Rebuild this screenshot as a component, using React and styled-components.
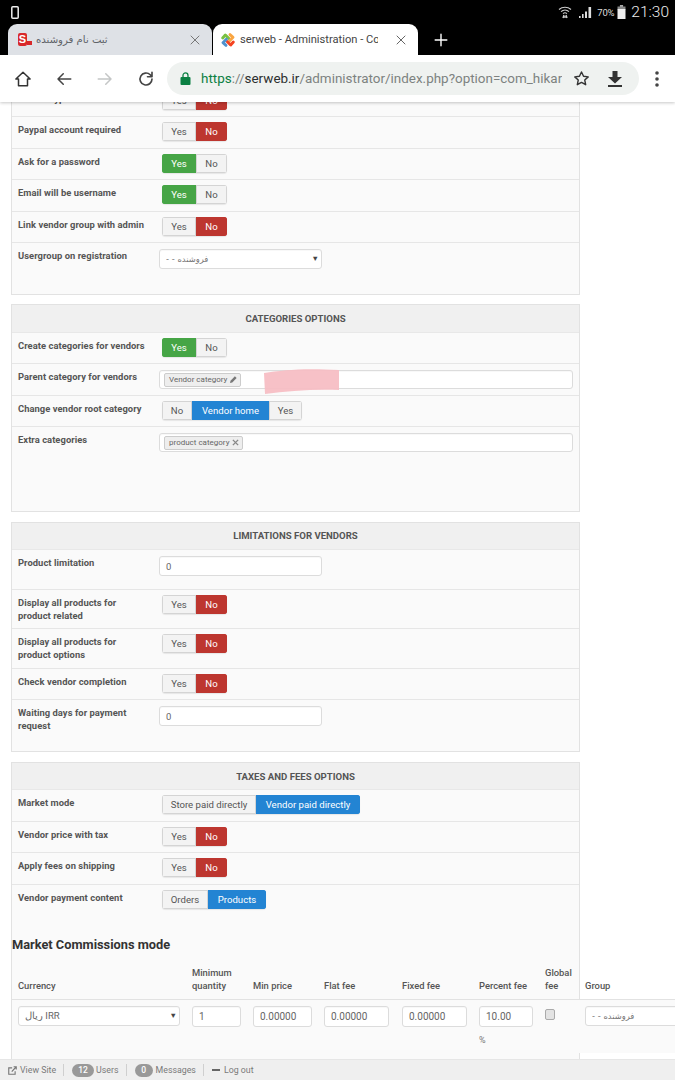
import React from 'react';
import styled, { createGlobalStyle } from 'styled-components';

const Global = createGlobalStyle`
  html, body { margin: 0; padding: 0; height: 100%; background: #fff; overflow: hidden; }
  body { font-family: Roboto, "Liberation Sans", sans-serif; }
  #root { height: 1080px; }
  * { box-sizing: border-box; }
`;

const Screen = styled.div`
  width: 675px; height: 1080px; display: flex; flex-direction: column; overflow: hidden; position: relative; background: #fff;
`;
const Chrome = styled.header`
  flex: none; position: relative; z-index: 3; box-shadow: 0 1px 3px rgba(0,0,0,.22);
`;
const StatusBar = styled.div`
  height: 24px; background: #000; color: #e8e8e8; display: flex; align-items: center; padding: 0 6px 0 11px;
`;
const StatusSpacer = styled.div`flex: 1;`;
const Percent = styled.span`font-size: 9.5px; margin: 0 3px 0 4px; color: #ddd; letter-spacing: -.2px;`;
const Clock = styled.span`font-size: 15.5px; font-weight: 300; margin-left: 5px; color: #eee;`;
const TabStrip = styled.div`
  height: 31px; background: #000; display: flex; align-items: stretch; padding-left: 8px; gap: 1px;
`;
const Tab = styled.div`
  width: ${p => p.$w}px; border-radius: 9px 9px 0 0; background: ${p => (p.$active ? '#fff' : '#dee1e6')};
  display: flex; align-items: center; padding: 0 11px 0 ${p => (p.$active ? 7 : 10)}px; gap: 4px; overflow: hidden;
`;
const TabTitle = styled.span`
  flex: none; width: 138px; font-size: 11.15px; color: #444; white-space: nowrap; overflow: hidden;
`;
const TabSpacer = styled.span`flex: 1;`;
const PersianTitle = styled.span`
  flex: 1; font-size: 10.1px; color: #5f6368; white-space: nowrap; font-family: "DejaVu Sans", sans-serif;
`;
const Favicon = styled.span`
  flex: none; width: 14px; height: 13px; position: relative; display: block;
  &::before { content: 'S'; position: absolute; left: 0; top: 0; width: 9px; height: 13px; border-radius: 2px; background: #d8282a; color: #fff; font: 700 11px/13px "Liberation Sans", sans-serif; text-align: center; }
  &::after { content: ''; position: absolute; right: 0; bottom: 1px; width: 5px; height: 4px; background: #d8282a; }
`;
const NewTab = styled.div`
  width: 44px; display: flex; align-items: center; justify-content: center; color: #fff;
`;
const Toolbar = styled.div`
  height: 47px; background: #fff; display: flex; align-items: center; padding: 0 12px 0 14px;
`;
const IconSlot = styled.div`
  width: ${p => p.$w || 41}px; flex: none; display: flex; justify-content: ${p => (p.$left ? 'flex-start' : 'center')};
`;
const Omnibox = styled.div`
  flex: none; width: 472px; height: 33px; border-radius: 17px; background: #eff2f0; display: flex; align-items: center; padding: 0 0 0 13px;
`;
const Url = styled.div`
  flex: none; width: 361px; margin-left: 10px; font-size: 13.45px; white-space: nowrap; overflow: hidden; color: #7d8280;
`;
const Scheme = styled.span`color: #0b8043;`;
const Host = styled.span`color: #2c2f2e;`;
const Sep = styled.span`color: #7d8280;`;

const Main = styled.main`flex: 1; min-height: 0; overflow: hidden;`;

const Panel = styled.section`
  width: 569px; margin: ${p => (p.$first ? -17 : 0)}px 0 9.4px 11px; background: #fafafa; border: 1px solid #e2e2e2;
`;
const PanelHead = styled.h3`
  margin: 0; height: 27.6px; background: #f0f0f0; display: flex; align-items: center; justify-content: center;
  font-size: 9.6px; font-weight: 700; color: #555; border-bottom: 1px solid #e8e8e8;
`;
const Row = styled.div`
  height: ${p => p.$h || 31.4}px; display: grid; grid-template-columns: 141px 1fr; padding: 5px 6px 0 6px; border-bottom: 1px solid ${p => (p.$last ? 'transparent' : '#e6e6e6')};
`;
const Label = styled.label`
  font-size: 9.4px; font-weight: 700; line-height: 13px; color: #555; width: 130px; padding-top: 1px; letter-spacing: .05px;
`;
const Control = styled.div`padding-left: ${p => (p.$field ? 0 : 3)}px; position: relative; padding-top: ${p => (p.$field ? 1 : 0)}px;`;

const ToggleGroup = styled.div`
  display: flex; width: fit-content; height: 19px; border-radius: 3px; overflow: hidden; box-shadow: 0 1px 1px rgba(0,0,0,.08);
`;
const Opt = styled.span`
  width: ${p => p.$w}px; display: flex; align-items: center; justify-content: center; font-size: 9.6px;
  background: ${p => ({ yes: '#46a546', no: '#bd362f', blue: '#2384d3' }[p.$on] || '#f3f3f3')};
  color: ${p => (p.$on ? '#fff' : '#555')};
  border: 1px solid ${p => ({ yes: '#46a546', no: '#bd362f', blue: '#2384d3' }[p.$on] || '#d4d4d4')};
`;
const Field = styled.div`
  width: ${p => p.$w || 163}px; height: 20px; background: #fff; border: 1px solid #dcdcdc; border-radius: 3px;
  display: flex; align-items: center; padding: 0 6px; font-size: 9.5px; color: #666; position: relative; box-shadow: inset 0 1px 1px rgba(0,0,0,.03);
`;
const FieldText = styled.span`flex: 1; white-space: nowrap; overflow: hidden;`;
const PersianOption = styled(FieldText)`font-family: "DejaVu Sans", sans-serif; font-size: 8.4px; color: #777;`;
const Caret = styled.span`font-size: 7.5px; color: #444; margin-right: -4px;`;
const TagInput = styled(Field)`width: 414px; height: 19px; padding: 0 4px;`;
const Tag = styled.span`
  display: inline-flex; align-items: center; gap: 3px; height: 14px; padding: 0 3px 0 4px; background: #eee; border: 1px solid #ccc; border-radius: 2px; font-size: 8px; color: #666;
`;
const Smear = styled.svg`
  position: absolute; left: 104px; top: -1px; width: 78px; height: 26px; pointer-events: none;
`;

const HeadingWrap = styled.div`height: 40px;`;
const Heading = styled.h2`
  margin: 0; padding-top: 16px; font-size: 12.8px; line-height: 16px; font-weight: 700; color: #333;
`;
const CommissionGrid = styled.div`
  width: 663px; display: grid; grid-template-columns: 180px 61px 71px 78px 77px 66px 40px 90px;
`;
const Th = styled.div`
  font-size: 9.4px; font-weight: 500; line-height: 13.5px; color: #555; height: 39px; display: flex; align-items: flex-end; padding-bottom: 6px;
  border-bottom: 1px solid #e2e2e2; padding-left: ${p => (p.$first ? 6 : 0)}px;
`;
const Td = styled.div`padding: 6px 0 0 ${p => (p.$first ? 6 : 0)}px; height: 53px; font-size: 9.5px; color: #777; background: #fafafa;`;
const Mini = styled(Field)`width: ${p => p.$w}px; font-size: 10px; height: 21px;`;
const PercentSign = styled.div`margin-top: 8px; font-size: 9px;`;
const Check = styled.input.attrs({ type: 'checkbox', readOnly: true })`
  appearance: none; display: block; margin: 3px 0 0; width: 10px; height: 11px; background: #e3e3e3; border: 1px solid #aaa; border-radius: 2px;
`;
const PanelTail = styled.div`height: 30px;`;

const Footer = styled.footer`
  flex: none; height: 21px; background: #efefef; border-top: 1px solid #e6e6e6; display: flex; align-items: center; padding-left: 8px; font-size: 8.8px; color: #7a7a7a; position: relative; z-index: 2;
`;
const FootItem = styled.span`display: flex; align-items: center; gap: ${p => p.$gap || 3}px;`;
const Divider = styled.span`width: 1px; height: 12px; background: #cfcfcf; margin: 0 8px 0 7px;`;
const Badge = styled.span`
  height: 13px; min-width: ${p => p.$w}px; border-radius: 7px; background: #999; color: #fff; font-size: 8.5px; font-weight: 500; display: flex; align-items: center; justify-content: center;
`;
const Minus = styled.span`width: 8px; height: 2px; background: #666; display: block; margin-right: 1px;`;

const YN = ({ v }) => (
  <ToggleGroup>
    <Opt $w={34} $on={v === 'yes' ? 'yes' : null}>Yes</Opt>
    <Opt $w={31} $on={v === 'no' ? 'no' : null}>No</Opt>
  </ToggleGroup>
);
const Choice = ({ items }) => (
  <ToggleGroup>
    {items.map(([t, w, on]) => <Opt key={t} $w={w} $on={on ? 'blue' : null}>{t}</Opt>)}
  </ToggleGroup>
);
const ToggleRow = ({ label, v, h, last }) => (
  <Row $h={h} $last={last}><Label>{label}</Label><Control><YN v={v} /></Control></Row>
);
const FieldRow = ({ label, h, last, children }) => (
  <Row $h={h} $last={last}><Label>{label}</Label><Control $field>{children}</Control></Row>
);

const I = ({ w = 18, h = 18, vb = '0 0 24 24', c = '#444', sw = 2, fill = 'none', children }) => (
  <svg width={w} height={h} viewBox={vb} fill={fill} stroke={c} strokeWidth={sw} strokeLinecap="round" strokeLinejoin="round">{children}</svg>
);
const Close = ({ c }) => (
  <I w={12} h={12} c={c} sw={2}><path d="M4 4l16 16M20 4L4 20" /></I>
);
const Joomla = () => (
  <svg width="16" height="16" viewBox="0 0 24 24" fill="none" strokeWidth="4.4" strokeLinecap="round" strokeLinejoin="round">
    <path d="M4 9L8 4.5l5 5" stroke="#7ac143" />
    <path d="M15 4l4.5 4-5 5" stroke="#f9a541" />
    <path d="M20 15l-4 4.5-5-5" stroke="#f44321" />
    <path d="M9 20l-4.5-4 5-5" stroke="#5091cd" />
  </svg>
);

export default function App() {
  return (
    <Screen>
      <Global />
      <Chrome>
        <StatusBar>
          <svg width="8" height="13" viewBox="0 0 8 13" fill="none" stroke="#eee" strokeWidth="1.5"><rect x=".8" y=".8" width="6.4" height="11.4" rx="1" /></svg>
          <StatusSpacer />
          <svg width="14" height="14" viewBox="0 0 14 14" fill="none" stroke="#ccc" strokeWidth="1.1">
            <path d="M1 4.5c3.4-3 8.6-3 12 0M3 6.6c2.3-2 5.7-2 8 0M5 8.6c1.2-1 2.8-1 4 0" />
            <path d="M5 13l1-3M9 13l-1-3M5.5 12h3" strokeWidth="1.4" />
          </svg>
          <svg width="14" height="12" viewBox="0 0 14 12" fill="#ddd" style={{ marginLeft: 7 }}>
            <rect x="0" y="10" width="1.6" height="2" /><rect x="3" y="8" width="1.6" height="4" /><rect x="6" y="5.5" width="2" height="6.5" /><rect x="9.5" y="1" width="2.6" height="11" />
          </svg>
          <Percent>70%</Percent>
          <svg width="9" height="14" viewBox="0 0 8 14" fill="#eee"><rect x="2.4" y="0" width="3.2" height="2" fill="#aaa" /><rect x="0" y="1.5" width="8" height="3" fill="#888" /><rect x="0" y="4" width="8" height="10" /></svg>
          <Clock>21:30</Clock>
        </StatusBar>
        <TabStrip>
          <Tab $w={204}>
            <Favicon />
            <PersianTitle>ثبت نام فروشنده</PersianTitle>
            <Close c="#777" />
          </Tab>
          <Tab $w={205} $active>
            <Joomla />
            <TabTitle>serweb - Administration - Cor</TabTitle>
            <TabSpacer />
            <Close c="#666" />
          </Tab>
          <NewTab><I w={14} h={14} c="#fff" sw={2.4}><path d="M12 2v20M2 12h20" /></I></NewTab>
        </TabStrip>
        <Toolbar>
          <IconSlot $w={41} $left>
            <I w={18} h={18} c="#333" sw={2}><path d="M12 3L2.5 12H6v9h12v-9h3.5z" /></I>
          </IconSlot>
          <IconSlot $w={41} $left>
            <I w={18} h={18} c="#444" sw={2}><path d="M21 12H4M11 5l-7 7 7 7" /></I>
          </IconSlot>
          <IconSlot $w={41} $left>
            <I w={18} h={18} c="#c4c6c6" sw={2}><path d="M3 12h17M13 5l7 7-7 7" /></I>
          </IconSlot>
          <IconSlot $w={30} $left>
            <I w={18} h={18} c="#444" sw={2.2}><path d="M20 12a8 8 0 1 1-2.4-5.7L20 9M20 3v6h-6" /></I>
          </IconSlot>
          <Omnibox>
            <svg width="11" height="13" viewBox="0 0 11 13" fill="#0b8043"><rect x="0.5" y="5" width="10" height="8" rx="1" /><path d="M3 5V3.4a2.5 2.5 0 0 1 5 0V5" fill="none" stroke="#0b8043" strokeWidth="1.3" /></svg>
            <Url><Scheme>https</Scheme><Sep>://</Sep><Host>serweb.ir</Host>/administrator/index.php?option=com_hikar</Url>
            <IconSlot $w={39}>
              <I w={17} h={17} c="#333" sw={2}><path d="M12 2.8l2.9 6.1 6.6.8-4.9 4.5 1.3 6.6L12 17.5l-5.9 3.3 1.3-6.6-4.9-4.5 6.6-.8z" /></I>
            </IconSlot>
            <IconSlot $w={28}>
              <svg width="14" height="16" viewBox="0 0 14 16" fill="#333"><path d="M4.5 0h5v6H14L7 12.5 0 6h4.5z" /><rect x="0" y="14" width="14" height="2" /></svg>
            </IconSlot>
          </Omnibox>
          <IconSlot $w={36}>
            <svg width="4" height="16" viewBox="0 0 4 16" fill="#444"><circle cx="2" cy="2" r="1.8" /><circle cx="2" cy="8" r="1.8" /><circle cx="2" cy="14" r="1.8" /></svg>
          </IconSlot>
        </Toolbar>
      </Chrome>

      <Main>
        <Panel $first>
          <ToggleRow label="Vendor type" v="no" />
          <ToggleRow label="Paypal account required" v="no" />
          <ToggleRow label="Ask for a password" v="yes" />
          <ToggleRow label="Email will be username" v="yes" />
          <ToggleRow label="Link vendor group with admin" v="no" />
          <FieldRow label="Usergroup on registration" h={51} last>
            <Field><PersianOption>- - فروشنده</PersianOption><Caret>▼</Caret></Field>
          </FieldRow>
        </Panel>

        <Panel>
          <PanelHead>CATEGORIES OPTIONS</PanelHead>
          <ToggleRow label="Create categories for vendors" v="yes" />
          <FieldRow label="Parent category for vendors">
            <TagInput>
              <Tag>Vendor category
                <svg width="7" height="7" viewBox="0 0 8 8" fill="#777"><path d="M0 8l.6-2.6L5.6.4l2 2-5 5z" /></svg>
              </Tag>
            </TagInput>
            <Smear viewBox="0 0 78 26" preserveAspectRatio="none"><path d="M1 5C20 2 40 0 76 2l0 20C50 21 25 23 2 26z" fill="#f6bcc2" opacity=".92" /></Smear>
          </FieldRow>
          <Row>
            <Label>Change vendor root category</Label>
            <Control><Choice items={[['No', 30], ['Vendor home', 77, true], ['Yes', 33]]} /></Control>
          </Row>
          <FieldRow label="Extra categories" h={84} last>
            <TagInput>
              <Tag>product category
                <svg width="7" height="7" viewBox="0 0 8 8" stroke="#888" strokeWidth="1.6"><path d="M1 1l6 6M7 1L1 7" /></svg>
              </Tag>
            </TagInput>
          </FieldRow>
        </Panel>

        <Panel>
          <PanelHead>LIMITATIONS FOR VENDORS</PanelHead>
          <FieldRow label="Product limitation" h={40}><Field>0</Field></FieldRow>
          <ToggleRow label="Display all products for product related" v="no" h={39} />
          <ToggleRow label="Display all products for product options" v="no" h={39.6} />
          <ToggleRow label="Check vendor completion" v="no" h={31.4} />
          <FieldRow label="Waiting days for payment request" h={51.4} last><Field>0</Field></FieldRow>
        </Panel>

        <Panel>
          <PanelHead>TAXES AND FEES OPTIONS</PanelHead>
          <Row><Label>Market mode</Label><Control><Choice items={[['Store paid directly', 94], ['Vendor paid directly', 104, true]]} /></Control></Row>
          <ToggleRow label="Vendor price with tax" v="no" />
          <ToggleRow label="Apply fees on shipping" v="no" />
          <Row $h={36} $last><Label>Vendor payment content</Label><Control><Choice items={[['Orders', 46], ['Products', 58, true]]} /></Control></Row>
          <HeadingWrap><Heading>Market Commissions mode</Heading></HeadingWrap>
          <CommissionGrid>
            <Th $first>Currency</Th><Th>Minimum quantity</Th><Th>Min price</Th><Th>Flat fee</Th><Th>Fixed fee</Th><Th>Percent fee</Th><Th>Global fee</Th><Th>Group</Th>
            <Td $first><Field $w={162}><FieldText>ریال IRR</FieldText><Caret>▼</Caret></Field></Td>
            <Td><Mini $w={49}>1</Mini></Td>
            <Td><Mini $w={59}>0.00000</Mini></Td>
            <Td><Mini $w={65}>0.00000</Mini></Td>
            <Td><Mini $w={65}>0.00000</Mini></Td>
            <Td><Mini $w={54}>10.00</Mini><PercentSign>%</PercentSign></Td>
            <Td><Check /></Td>
            <Td><Field $w={120}><PersianOption>- - فروشنده</PersianOption></Field></Td>
          </CommissionGrid>
          <PanelTail />
        </Panel>
      </Main>

      <Footer>
        <FootItem>
          <svg width="9" height="9" viewBox="0 0 12 12" fill="none" stroke="#777" strokeWidth="1.5"><path d="M9.5 7v4H1V2.5h4.5M5 7.5L11 1M7.5 1H11v3.5" /></svg>
          View Site
        </FootItem>
        <Divider />
        <FootItem $gap={2}><Badge $w={22}>12</Badge>Users</FootItem>
        <Divider />
        <FootItem><Badge $w={18}>0</Badge>Messages</FootItem>
        <Divider />
        <FootItem><Minus />Log out</FootItem>
      </Footer>
    </Screen>
  );
}
